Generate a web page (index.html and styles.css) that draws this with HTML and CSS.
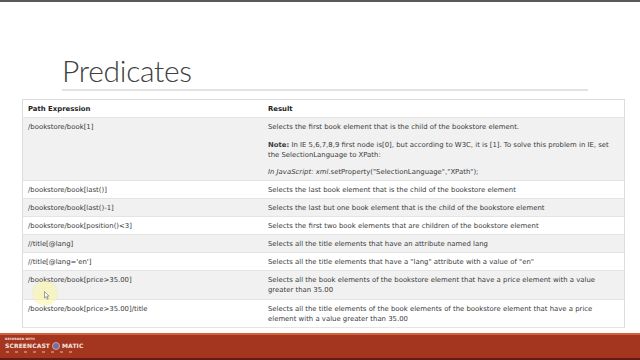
FILE: index.html
```html
<!DOCTYPE html>
<html>
<head>
<meta charset="utf-8">
<link rel="stylesheet" href="styles.css">
</head>
<body>
<div class="slide">
  <div class="topline"></div>
  <div class="title-wrap"><h1 class="title">Predicates</h1></div>
  <table class="ref">
    <tr><th class="c1">Path Expression</th><th>Result</th></tr>
    <tr><td>/bookstore/book[1]</td><td>
      <p class="p">Selects the first book element that is the child of the bookstore element.</p>
      <p class="p"><b>Note:</b> In IE 5,6,7,8,9 first node is[0], but according to W3C, it is [1]. To solve this problem in IE, set the SelectionLanguage to XPath:</p>
      <p class="p"><i>In JavaScript: xml</i>.setProperty("SelectionLanguage","XPath");</p>
    </td></tr>
    <tr><td>/bookstore/book[last()]</td><td>Selects the last book element that is the child of the bookstore element</td></tr>
    <tr><td>/bookstore/book[last()-1]</td><td>Selects the last but one book element that is the child of the bookstore element</td></tr>
    <tr><td>/bookstore/book[position()&lt;3]</td><td>Selects the first two book elements that are children of the bookstore element</td></tr>
    <tr><td>//title[@lang]</td><td>Selects all the title elements that have an attribute named lang</td></tr>
    <tr><td>//title[@lang='en']</td><td>Selects all the title elements that have a "lang" attribute with a value of "en"</td></tr>
    <tr><td>/bookstore/book[price&gt;35.00]</td><td>Selects all the book elements of the bookstore element that have a price element with a value greater than 35.00</td></tr>
    <tr><td>/bookstore/book[price&gt;35.00]/title</td><td>Selects all the title elements of the book elements of the bookstore element that have a price element with a value greater than 35.00</td></tr>
  </table>
  <div class="cursor"><svg width="6" height="9" viewBox="0 0 6 9"><path d="M0.5 0.5 L0.5 7 L2 5.6 L3.2 8.3 L4.2 7.9 L3 5.2 L5 5.2 Z" fill="#fff" stroke="#666" stroke-width="0.6"/></svg></div>
  <footer class="bar">
    <div class="logo">
      <div class="rec">RECORDED WITH</div>
      <div class="brand"><span>SCREENCAST</span><span class="dot"></span><span>MATIC</span></div>
      <div class="tools"><i></i><i></i><i></i><i></i><i></i><i></i><i></i><i></i></div>
    </div>
  </footer>
</div>
</body>
</html>
```
FILE: styles.css
```css
html, body { margin: 0; padding: 0; background: #fff; }
.slide {
  width: 640px; height: 360px; position: relative; overflow: hidden;
  display: flex; flex-direction: column; background: #fff;
}
.topline { height: 2px; background: #5a5a5a; flex: none; }
.title-wrap { padding-left: 62px; flex: none; }
.title {
  margin: 0; padding-top: 50px; width: 526px; height: 37px;
  font-family: Lato, "Open Sans", sans-serif; font-weight: 300;
  font-size: 30px; line-height: 36px; color: #404040;
  border-bottom: 2px solid #e2e2e2; letter-spacing: -0.3px;
}
.ref {
  margin: 8px 0 0 22px; width: 603px; border-collapse: collapse;
  font-family: "DejaVu Sans", Verdana, sans-serif; font-size: 6.9px;
  line-height: 10px; color: #3a3a3a; border: 1px solid #dcdcdc; flex: none;
}
.ref th, .ref td {
  text-align: left; vertical-align: top; padding: 4px 5px 3px 5px;
  border-bottom: 1px solid #e4e4e4;
}
.ref tr:nth-last-child(-n+2) td { padding-bottom: 3.5px; }
.ref th { font-weight: bold; color: #222; }
.ref .c1 { width: 230px; }
.ref tr:nth-child(even) { background: #f1f1f1; }
.p { margin: 0 0 7.5px 0; }
.p:last-child { margin-bottom: 0; }
.cursor {
  position: absolute; left: 33px; top: 281px; width: 24px; height: 24px;
  border-radius: 50%; background: rgba(250, 245, 160, 0.55);
  box-shadow: 0 0 2px rgba(230, 220, 120, 0.6);
}
.cursor svg { position: absolute; left: 11px; top: 10px; }
.bar {
  margin-top: auto; height: 23px; flex: none;
  background: #a4351f;
  border-top: 2px solid #d2603a;
  border-bottom: 2px solid #5e1c12;
  position: relative;
}
.logo { padding: 2px 0 0 5px; font-family: "DejaVu Sans", sans-serif; color: #f4e6e0; }
.rec { font-size: 3px; line-height: 4px; font-weight: bold; letter-spacing: 0.1px; }
.brand { display: flex; align-items: center; gap: 2px; font-size: 6px; font-weight: bold; line-height: 9px; letter-spacing: 0.1px; }
.dot {
  width: 8px; height: 8px; border-radius: 50%; background: #7c6a9e;
  border: 1px solid #c9a8a0; box-sizing: border-box;
}
.tools { display: flex; gap: 6px; padding-left: 1px; margin-top: 1px; }
.tools i { width: 3px; height: 2px; background: #c47a68; display: block; }
```
